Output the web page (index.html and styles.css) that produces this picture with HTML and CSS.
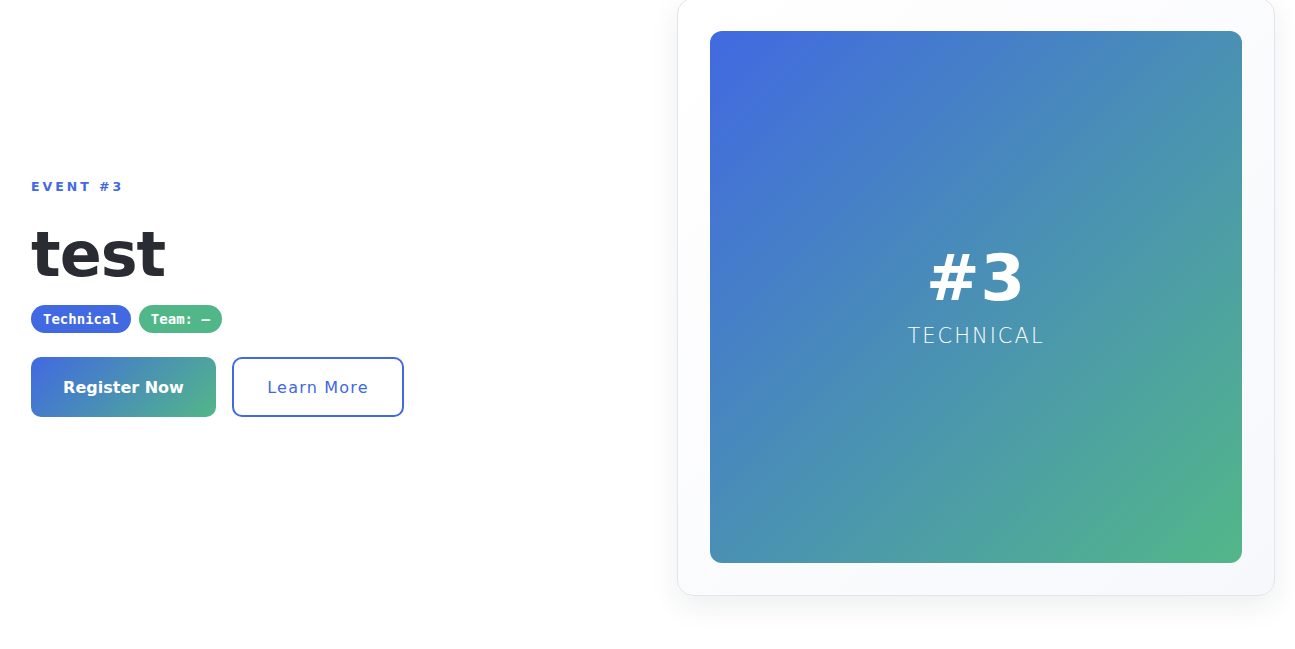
FILE: index.html
```html
<!DOCTYPE html>
<html lang="en">
<head>
<meta charset="utf-8">
<title>Event #3 — test</title>
<link rel="stylesheet" href="styles.css">
</head>
<body>
<main class="hero">
  <section class="info">
    <div class="eyebrow">EVENT #3</div>
    <h1 class="title">test</h1>
    <div class="tags">
      <span class="tag tag-blue">Technical</span>
      <span class="tag tag-green">Team: –</span>
    </div>
    <div class="actions">
      <a class="btn btn-primary" href="#">Register Now</a>
      <a class="btn btn-outline" href="#">Learn More</a>
    </div>
  </section>
  <aside class="card">
    <div class="poster">
      <div class="poster-num">#3</div>
      <div class="poster-cat">TECHNICAL</div>
    </div>
  </aside>
</main>
</body>
</html>
```
FILE: styles.css
```css
* { box-sizing: border-box; }
html, body { margin: 0; padding: 0; background: #ffffff; }
body {
  font-family: "DejaVu Sans", "Liberation Sans", sans-serif;
  color: #2a2c33;
  min-height: 100vh;
  padding-bottom: 60px;
}

.hero {
  display: grid;
  grid-template-columns: 1fr 598px;
  gap: 32px;
  align-items: center;
  padding: 0 20px 0 31px;
  margin-top: -2px;
  height: 598px;
}

.info {
  display: flex;
  flex-direction: column;
  align-items: flex-start;
  padding-top: 2px;
}

.eyebrow {
  font-family: "DejaVu Sans", sans-serif;
  font-size: 12.5px;
  font-weight: 600;
  letter-spacing: 3px;
  color: #4169e1;
  line-height: 16px;
}

.title {
  margin: 28px 0 0;
  font-family: "DejaVu Sans", sans-serif;
  font-size: 62px;
  font-weight: 700;
  line-height: 64px;
  letter-spacing: -1px;
  color: #2a2c33;
}

.tags { display: flex; gap: 8px; margin-top: 18px; }
.tag {
  font-family: "DejaVu Sans Mono", monospace;
  font-weight: 700;
  font-size: 14px;
  color: #ffffff;
  height: 28px;
  line-height: 28px;
  padding: 0 12px;
  border-radius: 14px;
}
.tag-blue { background: #4169e1; }
.tag-green { background: #52b788; }

.actions { display: flex; gap: 16px; margin-top: 24px; }
.btn {
  display: flex;
  align-items: center;
  justify-content: center;
  height: 60px;
  border-radius: 10px;
  font-family: "DejaVu Sans", sans-serif;
  font-size: 16px;
  text-decoration: none;
}
.btn-primary {
  width: 185px;
  background: linear-gradient(135deg, #4169e1, #52b788);
  color: #ffffff;
  font-weight: 700;
}
.btn-outline {
  width: 172px;
  border: 2px solid #4169e1;
  color: #4169e1;
  background: #ffffff;
  letter-spacing: 1.2px;
}

.card {
  height: 598px;
  padding: 32px;
  border: 1px solid #e3e5ea;
  border-radius: 16px;
  background: linear-gradient(135deg, #ffffff, #f7f8fc);
  box-shadow: 0 10px 30px rgba(30, 40, 70, 0.08);
}
.poster {
  height: 100%;
  border-radius: 12px;
  background: linear-gradient(135deg, #4169e1 0%, #52b788 100%);
  display: flex;
  flex-direction: column;
  align-items: center;
  justify-content: center;
  color: #ffffff;
}
.poster-num {
  font-family: "DejaVu Sans", sans-serif;
  font-weight: 700;
  font-size: 64px;
  line-height: 64px;
  letter-spacing: 1px;
}
.poster-cat {
  margin-top: 14px;
  font-family: "DejaVu Sans", sans-serif;
  font-size: 21px;
  font-weight: 300;
  letter-spacing: 2px;
}
```
